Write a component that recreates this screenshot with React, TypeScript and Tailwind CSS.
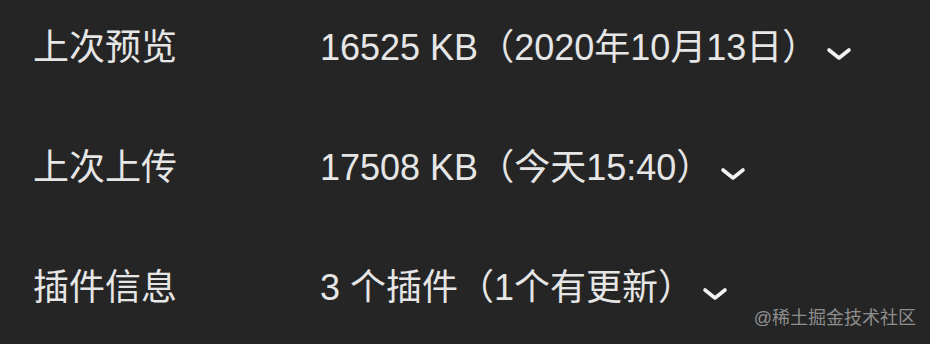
const rows: [string, string][] = [
  ['上次预览', '16525 KB（2020年10月13日）'],
  ['上次上传', '17508 KB（今天15:40）'],
  ['插件信息', '3 个插件（1个有更新）'],
];

function Chevron() {
  return (
    <svg width="26" height="14" viewBox="0 0 26 14" className="ml-[8px] mt-[12px] shrink-0">
      <path d="M3 3 L13 11 L23 3" fill="none" stroke="#f2f2f2" strokeWidth="3.6" strokeLinecap="round" strokeLinejoin="round" />
    </svg>
  );
}

export default function App() {
  return (
    <div
      className="relative w-[930px] h-[344px] overflow-hidden bg-[#252525] text-[#e6e6e6]"
      style={{ fontFamily: '"Liberation Sans", "Noto Sans CJK SC", sans-serif' }}
    >
      <div className="flex flex-col gap-[84px] pt-[30px] pl-[33px]">
        {rows.map(([label, value]) => (
          <div key={label} className="flex items-center text-[36px] leading-[36px]">
            <span className="w-[287px] shrink-0">{label}</span>
            <span className="whitespace-nowrap">{value}</span>
            <Chevron />
          </div>
        ))}
      </div>
      <div className="absolute right-[14px] top-[306px] text-[18px] leading-[24px] text-[#8e8e8e] whitespace-nowrap">
        @稀土掘金技术社区
      </div>
    </div>
  );
}
